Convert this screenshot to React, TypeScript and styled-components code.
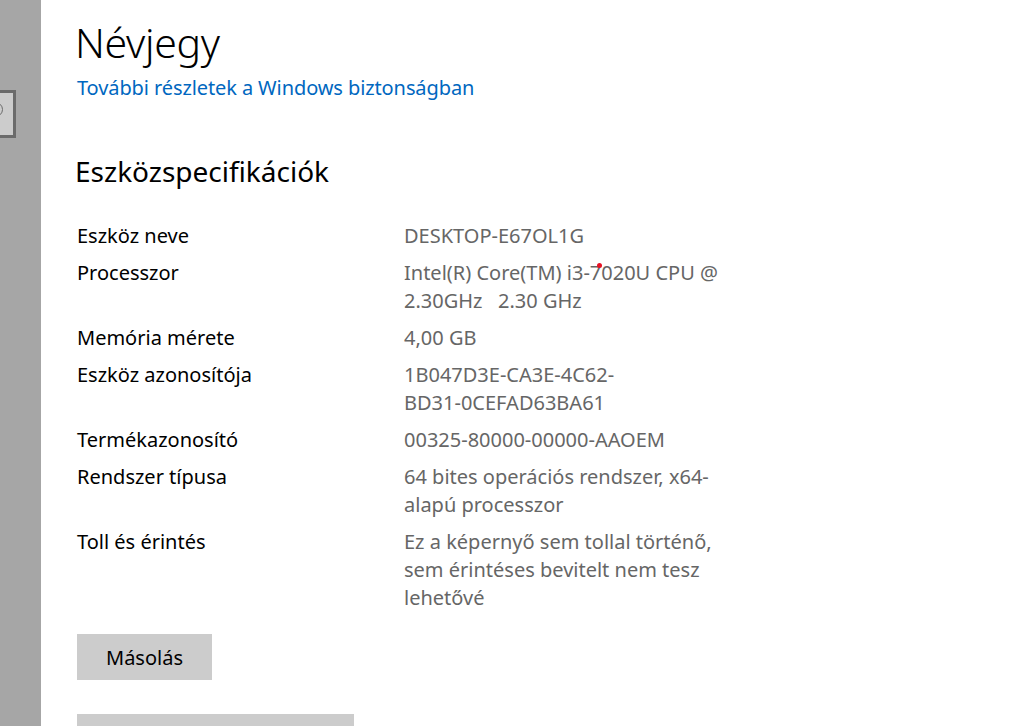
import React from "react";
import styled, { createGlobalStyle } from "styled-components";

const GlobalStyle = createGlobalStyle`
  html, body {
    margin: 0;
    padding: 0;
    background: #ffffff;
    overflow: hidden;
  }
  body {
    font-family: "Segoe UI", "Noto Sans", sans-serif;
  }
`;

const Screen = styled.div`
  display: flex;
  width: 1024px;
  height: 726px;
  overflow: hidden;
`;

const SideStrip = styled.div`
  width: 41px;
  flex-shrink: 0;
  background: #a6a6a6;
  padding-top: 90px;
  box-sizing: border-box;
`;

const SideBox = styled.div`
  position: relative;
  width: 16px;
  height: 48px;
  box-sizing: border-box;
  border: 3px solid #6b6b6b;
  border-left: none;
  background: #cccccc;
  overflow: hidden;
`;

const SideGlyph = styled.span`
  position: absolute;
  left: -12px;
  top: 9px;
  width: 13px;
  height: 13px;
  border: 1.5px solid #6b6b6b;
  border-radius: 50%;
`;

const Content = styled.main`
  flex: 1;
  padding: 14px 0 0 34px;
  display: flex;
  flex-direction: column;
  align-items: flex-start;
  & > * {
    flex-shrink: 0;
  }
`;

const Title = styled.h1`
  margin: 0;
  font-size: 41px;
  font-weight: 300;
  line-height: 56px;
  color: #000;
  letter-spacing: -0.3px;
`;

const Link = styled.a`
  margin: 4px 0 0 2px;
  font-size: 20px;
  line-height: 28px;
  color: #0067c0;
  text-decoration: none;
  letter-spacing: -0.1px;
`;

const SectionTitle = styled.h2`
  margin: 49px 0 0 0;
  font-size: 28px;
  font-weight: 400;
  line-height: 40px;
  color: #000;
`;

const SpecList = styled.dl`
  margin: 31px 0 0 2px;
  display: grid;
  grid-template-columns: 327px 320px;
  row-gap: 9px;
  font-size: 20px;
  line-height: 28px;
`;

const Term = styled.dt`
  margin: 0;
  color: #000;
`;

const Value = styled.dd`
  position: relative;
  margin: 0;
  color: #666666;
`;

const RedDot = styled.span`
  position: absolute;
  left: 193px;
  top: 4px;
  width: 5px;
  height: 5px;
  border-radius: 50%;
  background: #e81123;
`;

const Button = styled.button`
  margin: 22px 0 0 2px;
  width: 135px;
  height: 46px;
  border: none;
  background: #cccccc;
  font-family: inherit;
  font-size: 20px;
  color: #000;
  padding: 0;
`;

const WideButton = styled(Button)`
  margin-top: 34px;
  width: 277px;
`;

const specs: { label: string; value: React.ReactNode }[] = [
  { label: "Eszköz neve", value: "DESKTOP-E67OL1G" },
  {
    label: "Processzor",
    value: (
      <>
        Intel(R) Core(TM) i3-7020U CPU @<br />
        2.30GHz&nbsp;&nbsp; 2.30 GHz
        <RedDot />
      </>
    ),
  },
  { label: "Memória mérete", value: "4,00 GB" },
  {
    label: "Eszköz azonosítója",
    value: (
      <>
        1B047D3E-CA3E-4C62-
        <br />
        BD31-0CEFAD63BA61
      </>
    ),
  },
  { label: "Termékazonosító", value: "00325-80000-00000-AAOEM" },
  {
    label: "Rendszer típusa",
    value: (
      <>
        64 bites operációs rendszer, x64-
        <br />
        alapú processzor
      </>
    ),
  },
  {
    label: "Toll és érintés",
    value: (
      <>
        Ez a képernyő sem tollal történő,
        <br />
        sem érintéses bevitelt nem tesz
        <br />
        lehetővé
      </>
    ),
  },
];

export default function App() {
  return (
    <>
      <GlobalStyle />
      <Screen>
        <SideStrip>
          <SideBox>
            <SideGlyph />
          </SideBox>
        </SideStrip>
        <Content>
          <Title>Névjegy</Title>
          <Link href="#">További részletek a Windows biztonságban</Link>
          <SectionTitle>Eszközspecifikációk</SectionTitle>
          <SpecList>
            {specs.map((s) => (
              <React.Fragment key={s.label}>
                <Term>{s.label}</Term>
                <Value>{s.value}</Value>
              </React.Fragment>
            ))}
          </SpecList>
          <Button>Másolás</Button>
          <WideButton />
        </Content>
      </Screen>
    </>
  );
}
